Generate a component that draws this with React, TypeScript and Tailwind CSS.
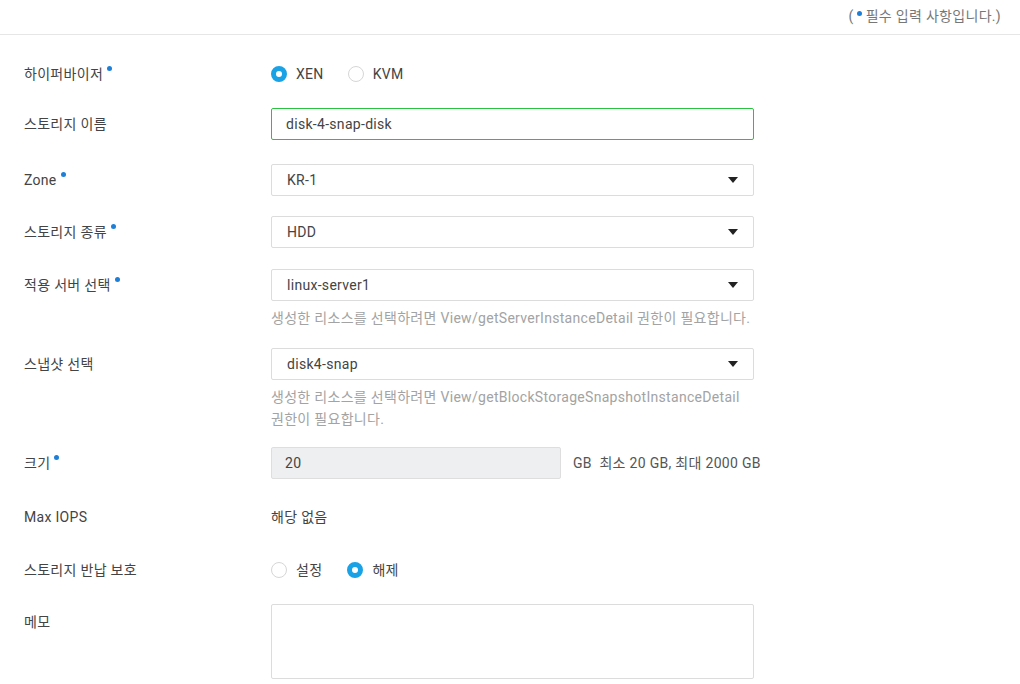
import type { ReactNode } from 'react';

const font = { fontFamily: 'Roboto, "Noto Sans CJK KR", sans-serif' };

function Dot() {
  return <span className="ml-[4px] inline-block h-[5px] w-[5px] -translate-y-[6px] rounded-full bg-[#1e7fd9] align-middle" />;
}

function Label({ text, required }: { text: string; required?: boolean }) {
  return (
    <div className="flex h-8 w-[271px] shrink-0 items-center pl-6 text-[14px] tracking-[0.3px] text-[#444]">
      <span>{text}</span>
      {required && <Dot />}
    </div>
  );
}

function Radio({ checked, label }: { checked?: boolean; label: string }) {
  return (
    <label className="flex items-center gap-[9px] text-[14px] tracking-[0.3px] text-[#444]">
      {checked ? (
        <span className="inline-block h-4 w-4 rounded-full border-[5px] border-[#1aa2e6] bg-white" />
      ) : (
        <span className="inline-block h-4 w-4 rounded-full border border-[#d6d6d6] bg-white" />
      )}
      {label}
    </label>
  );
}

function Select({ value }: { value: string }) {
  return (
    <div className="flex h-8 w-[483px] items-center justify-between rounded-[2px] border border-[#dcdcdc] bg-white pl-[15px] pr-[15px] text-[14px] tracking-[0.3px] text-[#444]">
      <span>{value}</span>
      <svg width="10" height="6" viewBox="0 0 10 6">
        <path d="M0 0 L10 0 L5 6 Z" fill="#222" />
      </svg>
    </div>
  );
}

function Row({ children, className = '' }: { children: ReactNode; className?: string }) {
  return <div className={`flex ${className}`}>{children}</div>;
}

function Help({ children }: { children: ReactNode }) {
  return (
    <p className="mt-[6px] w-[483px] break-keep text-[14px] leading-[22px] tracking-[0.3px] text-[#a3a3a3]">{children}</p>
  );
}

export default function App() {
  return (
    <div className="min-h-screen w-[1020px] bg-white" style={font}>
      {/* Header */}
      <div className="flex h-[35px] items-center justify-end border-b border-[#e6e6e6] pb-[2px] pr-[19px] text-[14px] tracking-[0.3px] text-[#777]">
        <span>(</span>
        <span className="ml-[3px] mr-[4px] inline-block h-[5px] w-[5px] -translate-y-[3px] rounded-full bg-[#1e7fd9]" />
        <span>필수 입력 사항입니다.)</span>
      </div>

      <div className="flex flex-col">
        {/* 하이퍼바이저 */}
        <Row className="mt-[23px]">
          <Label text="하이퍼바이저" required />
          <div className="flex h-8 items-center gap-[24px]">
            <Radio checked label="XEN" />
            <Radio label="KVM" />
          </div>
        </Row>

        {/* 스토리지 이름 */}
        <Row className="mt-[18px]">
          <Label text="스토리지 이름" />
          <div className="flex h-8 w-[483px] items-center rounded-[2px] border border-[#2cc241] bg-white pl-[14px] text-[14px] tracking-[0.3px] text-[#444]">
            disk-4-snap-disk
          </div>
        </Row>

        {/* Zone */}
        <Row className="mt-[24px]">
          <Label text="Zone" required />
          <Select value="KR-1" />
        </Row>

        {/* 스토리지 종류 */}
        <Row className="mt-[20px]">
          <Label text="스토리지 종류" required />
          <Select value="HDD" />
        </Row>

        {/* 적용 서버 선택 */}
        <Row className="mt-[21px]">
          <Label text="적용 서버 선택" required />
          <div>
            <Select value="linux-server1" />
            <Help>생성한 리소스를 선택하려면 View/getServerInstanceDetail 권한이 필요합니다.</Help>
          </div>
        </Row>

        {/* 스냅샷 선택 */}
        <Row className="mt-[19px]">
          <Label text="스냅샷 선택" />
          <div>
            <Select value="disk4-snap" />
            <Help>생성한 리소스를 선택하려면 View/getBlockStorageSnapshotInstanceDetail 권한이 필요합니다.</Help>
          </div>
        </Row>

        {/* 크기 */}
        <Row className="mt-[17px]">
          <Label text="크기" required />
          <div className="flex items-center">
            <div className="flex h-8 w-[290px] items-center rounded-[2px] border border-[#dedede] bg-[#eeeff1] pl-[13px] text-[14px] tracking-[0.3px] text-[#444]">
              20
            </div>
            <span className="ml-[12px] text-[14px] tracking-[0.3px] text-[#555]">GB&nbsp;&nbsp;최소 20 GB, 최대 2000 GB</span>
          </div>
        </Row>

        {/* Max IOPS */}
        <Row className="mt-[22px]">
          <Label text="Max IOPS" />
          <div className="flex h-8 items-center text-[14px] tracking-[0.3px] text-[#444]">해당 없음</div>
        </Row>

        {/* 스토리지 반납 보호 */}
        <Row className="mt-[21px]">
          <Label text="스토리지 반납 보호" />
          <div className="flex h-8 items-center gap-[25px]">
            <Radio label="설정" />
            <Radio checked label="해제" />
          </div>
        </Row>

        {/* 메모 */}
        <Row className="mt-[18px]">
          <div className="w-[271px] shrink-0 pl-6 pt-[8px] text-[14px] tracking-[0.3px] text-[#444]">메모</div>
          <div className="h-[75px] w-[483px] rounded-[2px] border border-[#dcdcdc] bg-white" />
        </Row>
      </div>
    </div>
  );
}
